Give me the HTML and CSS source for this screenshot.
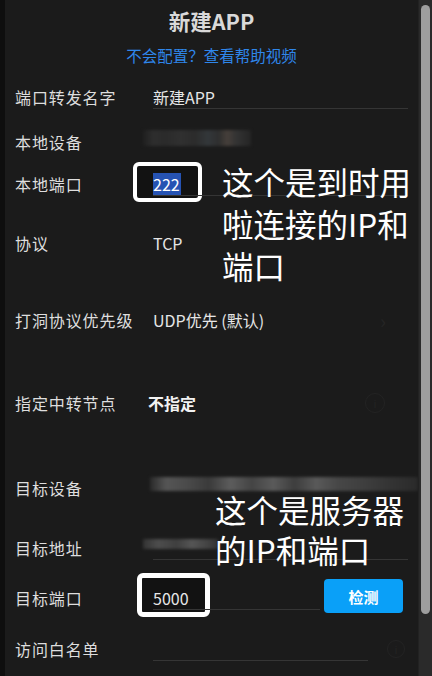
FILE: index.html
```html
<!DOCTYPE html>
<html lang="zh-CN">
<head>
<meta charset="utf-8">
<title>新建APP</title>
<link rel="stylesheet" href="styles.css">
</head>
<body>
<div class="app">
  <div class="edge"></div>
  <main class="panel">
    <h1 class="title">新建APP</h1>
    <a class="help">不会配置？查看帮助视频</a>
    <div class="form">
      <div class="row r1">
        <span class="label">端口转发名字</span>
        <div class="field line"><span class="val">新建APP</span></div>
      </div>
      <div class="row r2">
        <span class="label">本地设备</span>
        <div class="field"><span class="mosaic m-local"></span></div>
      </div>
      <div class="row r3">
        <span class="label">本地端口</span>
        <div class="field line"><span class="val sel">222</span></div>
      </div>
      <div class="row r4">
        <span class="label">协议</span>
        <div class="field"><span class="val">TCP</span></div>
      </div>
      <div class="row r5">
        <span class="label">打洞协议优先级</span>
        <div class="field"><span class="val">UDP优先 (默认)</span><span class="chev">›</span></div>
      </div>
      <div class="row r6">
        <span class="label">指定中转节点</span>
        <div class="field"><span class="val bold shift">不指定</span><span class="info i6">i</span></div>
      </div>
      <div class="row r7">
        <span class="label">目标设备</span>
        <div class="field"><span class="mosaic m-dev"></span></div>
      </div>
      <div class="row r8">
        <span class="label">目标地址</span>
        <div class="field line"><span class="mosaic m-addr"></span></div>
      </div>
      <div class="row r9">
        <span class="label">目标端口</span>
        <div class="field line short"><span class="val">5000</span></div>
        <button class="check">检测</button>
      </div>
      <div class="row r10">
        <span class="label">访问白名单</span>
        <div class="field line shorter"></div>
        <span class="info i10">i</span>
      </div>
    </div>

    <div class="box box-local"></div>
    <div class="box box-target"></div>
    <p class="note note-local">这个是到时用<br>啦连接的IP和<br>端口</p>
    <p class="note note-target">这个是服务器<br>的IP和端口</p>
  </main>
  <div class="scrollbar"><div class="thumb"></div></div>
</div>
</body>
</html>
```
FILE: styles.css
```css
* { box-sizing: border-box; }

html, body {
  margin: 0;
  padding: 0;
  width: 432px;
  height: 676px;
  overflow: hidden;
  background: #1b1b1b;
  font-family: "Noto Sans CJK SC", "Noto Sans", sans-serif;
}

.app {
  display: flex;
  width: 432px;
  height: 676px;
}

.edge {
  width: 5px;
  background: #0e0e0e;
  flex: none;
}

.panel {
  position: relative;
  flex: 1;
  min-width: 0;
  background: #1b1b1b;
  padding: 0 10px 0 10px;
  display: flex;
  flex-direction: column;
}

.title {
  margin: 0;
  padding-top: 6px;
  height: 36px;
  line-height: 30px;
  text-align: center;
  font-size: 21.5px;
  font-weight: 700;
  color: #d9d9d9;
}

.help {
  display: block;
  margin-top: 7px;
  line-height: 24px;
  text-align: center;
  font-size: 15.5px;
  color: #2f86ea;
}

.form {
  position: relative;
  z-index: 1;
  display: flex;
  flex-direction: column;
  margin-top: 10px;
  min-width: 0;
}

.row {
  display: flex;
  align-items: center;
  height: 40px;
  min-width: 0;
}
.r2 { margin-top: 5px; }
.r3 { margin-top: 2px; }
.r4 { margin-top: 19px; }
.r5 { margin-top: 37px; }
.r6 { margin-top: 43px; }
.r7 { margin-top: 45px; }
.r8 { margin-top: 20px; }
.r9 { margin-top: 10px; }
.r10 { margin-top: 11px; }

.label {
  width: 138px;
  flex: none;
  font-size: 16px;
  letter-spacing: 0.9px;
  color: #dedede;
  white-space: nowrap;
}

.field {
  position: relative;
  flex: 1;
  min-width: 0;
  height: 24px;
  display: flex;
  align-items: center;
  font-size: 16px;
  color: #e6e6e6;
}
.field.line { border-bottom: 1px solid #353535; }
.field.short { flex: none; width: 167px; }
.field.shorter { flex: none; width: 215px; }

.val { line-height: 22px; white-space: nowrap; }
.val.bold { font-weight: 700; color: #f2f2f2; }
.val.shift { margin-left: -5px; }
.sel {
  background: #2653b3;
  color: #ffffff;
  padding: 0 1px 0 0;
}

.chev {
  margin-left: auto;
  margin-right: 22px;
  color: #252525;
  font-size: 20px;
}

.info {
  margin-left: auto;
  margin-right: 23px;
  width: 20px;
  height: 20px;
  flex: none;
  border-radius: 50%;
  border: 1px solid #232323;
  color: #232323;
  font-size: 11px;
  line-height: 18px;
  text-align: center;
  font-style: normal;
}
.info.i10 { margin-left: 19px; margin-right: 0; width: 18px; height: 18px; line-height: 16px; }

.mosaic {
  display: block;
  flex: none;
  filter: blur(1.5px);
}
.m-local {
  width: 108px;
  height: 16px;
  margin-left: -10px;
  margin-top: -8px;
  background: linear-gradient(90deg, #1f1f1f 0%, #2e2e2e 10%, #2a2a2a 20%, #303030 35%, #2b2b2b 48%, #33373a 60%, #2e2e2e 70%, #463f3a 78%, #333 86%, #252525 100%);
}
.m-dev {
  width: 268px;
  height: 14px;
  margin-left: -3px;
  margin-top: -8px;
  background: linear-gradient(90deg, #2a2a2a 0%, #555 6%, #4a4a4a 14%, #3a3a3a 22%, #5c5c5c 30%, #444 38%, #5a5a5a 46%, #3d3d3d 54%, #595959 62%, #474747 70%, #3e3e3e 80%, #333 90%, #2a2a2a 100%);
}
.m-addr {
  width: 75px;
  height: 10px;
  margin-left: -10px;
  margin-top: -8px;
  background: linear-gradient(90deg, #333 0%, #4d4d4d 20%, #3f3f3f 45%, #555 65%, #444 85%, #333 100%);
}

.check {
  flex: none;
  margin-left: auto;
  margin-right: 5px;
  width: 79px;
  height: 34px;
  border: none;
  border-radius: 4px;
  background: #0aa0f8;
  color: #ffffff;
  font-family: "Noto Sans CJK SC", sans-serif;
  font-size: 15px;
  font-weight: 700;
  margin-top: -4px;
}

.box {
  position: absolute;
  border: 4px solid #ffffff;
  border-radius: 6px;
  background: #121212;
  z-index: 0;
}
.box-local { left: 128px; top: 162px; width: 69px; height: 40px; }
.box-target { left: 132px; top: 573px; width: 73px; height: 44px; border-width: 5px; }

.note {
  position: absolute;
  margin: 0;
  color: #ffffff;
  font-size: 31.5px;
  line-height: 42px;
  font-weight: 400;
  z-index: 2;
}
.note-local { left: 217px; top: 160px; }
.note-target { left: 210px; top: 489px; line-height: 40px; }

.scrollbar {
  width: 14px;
  flex: none;
  background: #2a2a2a;
  border-left: 1px solid #222;
  position: relative;
  z-index: 3;
  padding: 5px 1px 0 2px;
}
.thumb {
  width: 9px;
  height: 609px;
  border-radius: 5px;
  background: #9e9e9e;
}
```
